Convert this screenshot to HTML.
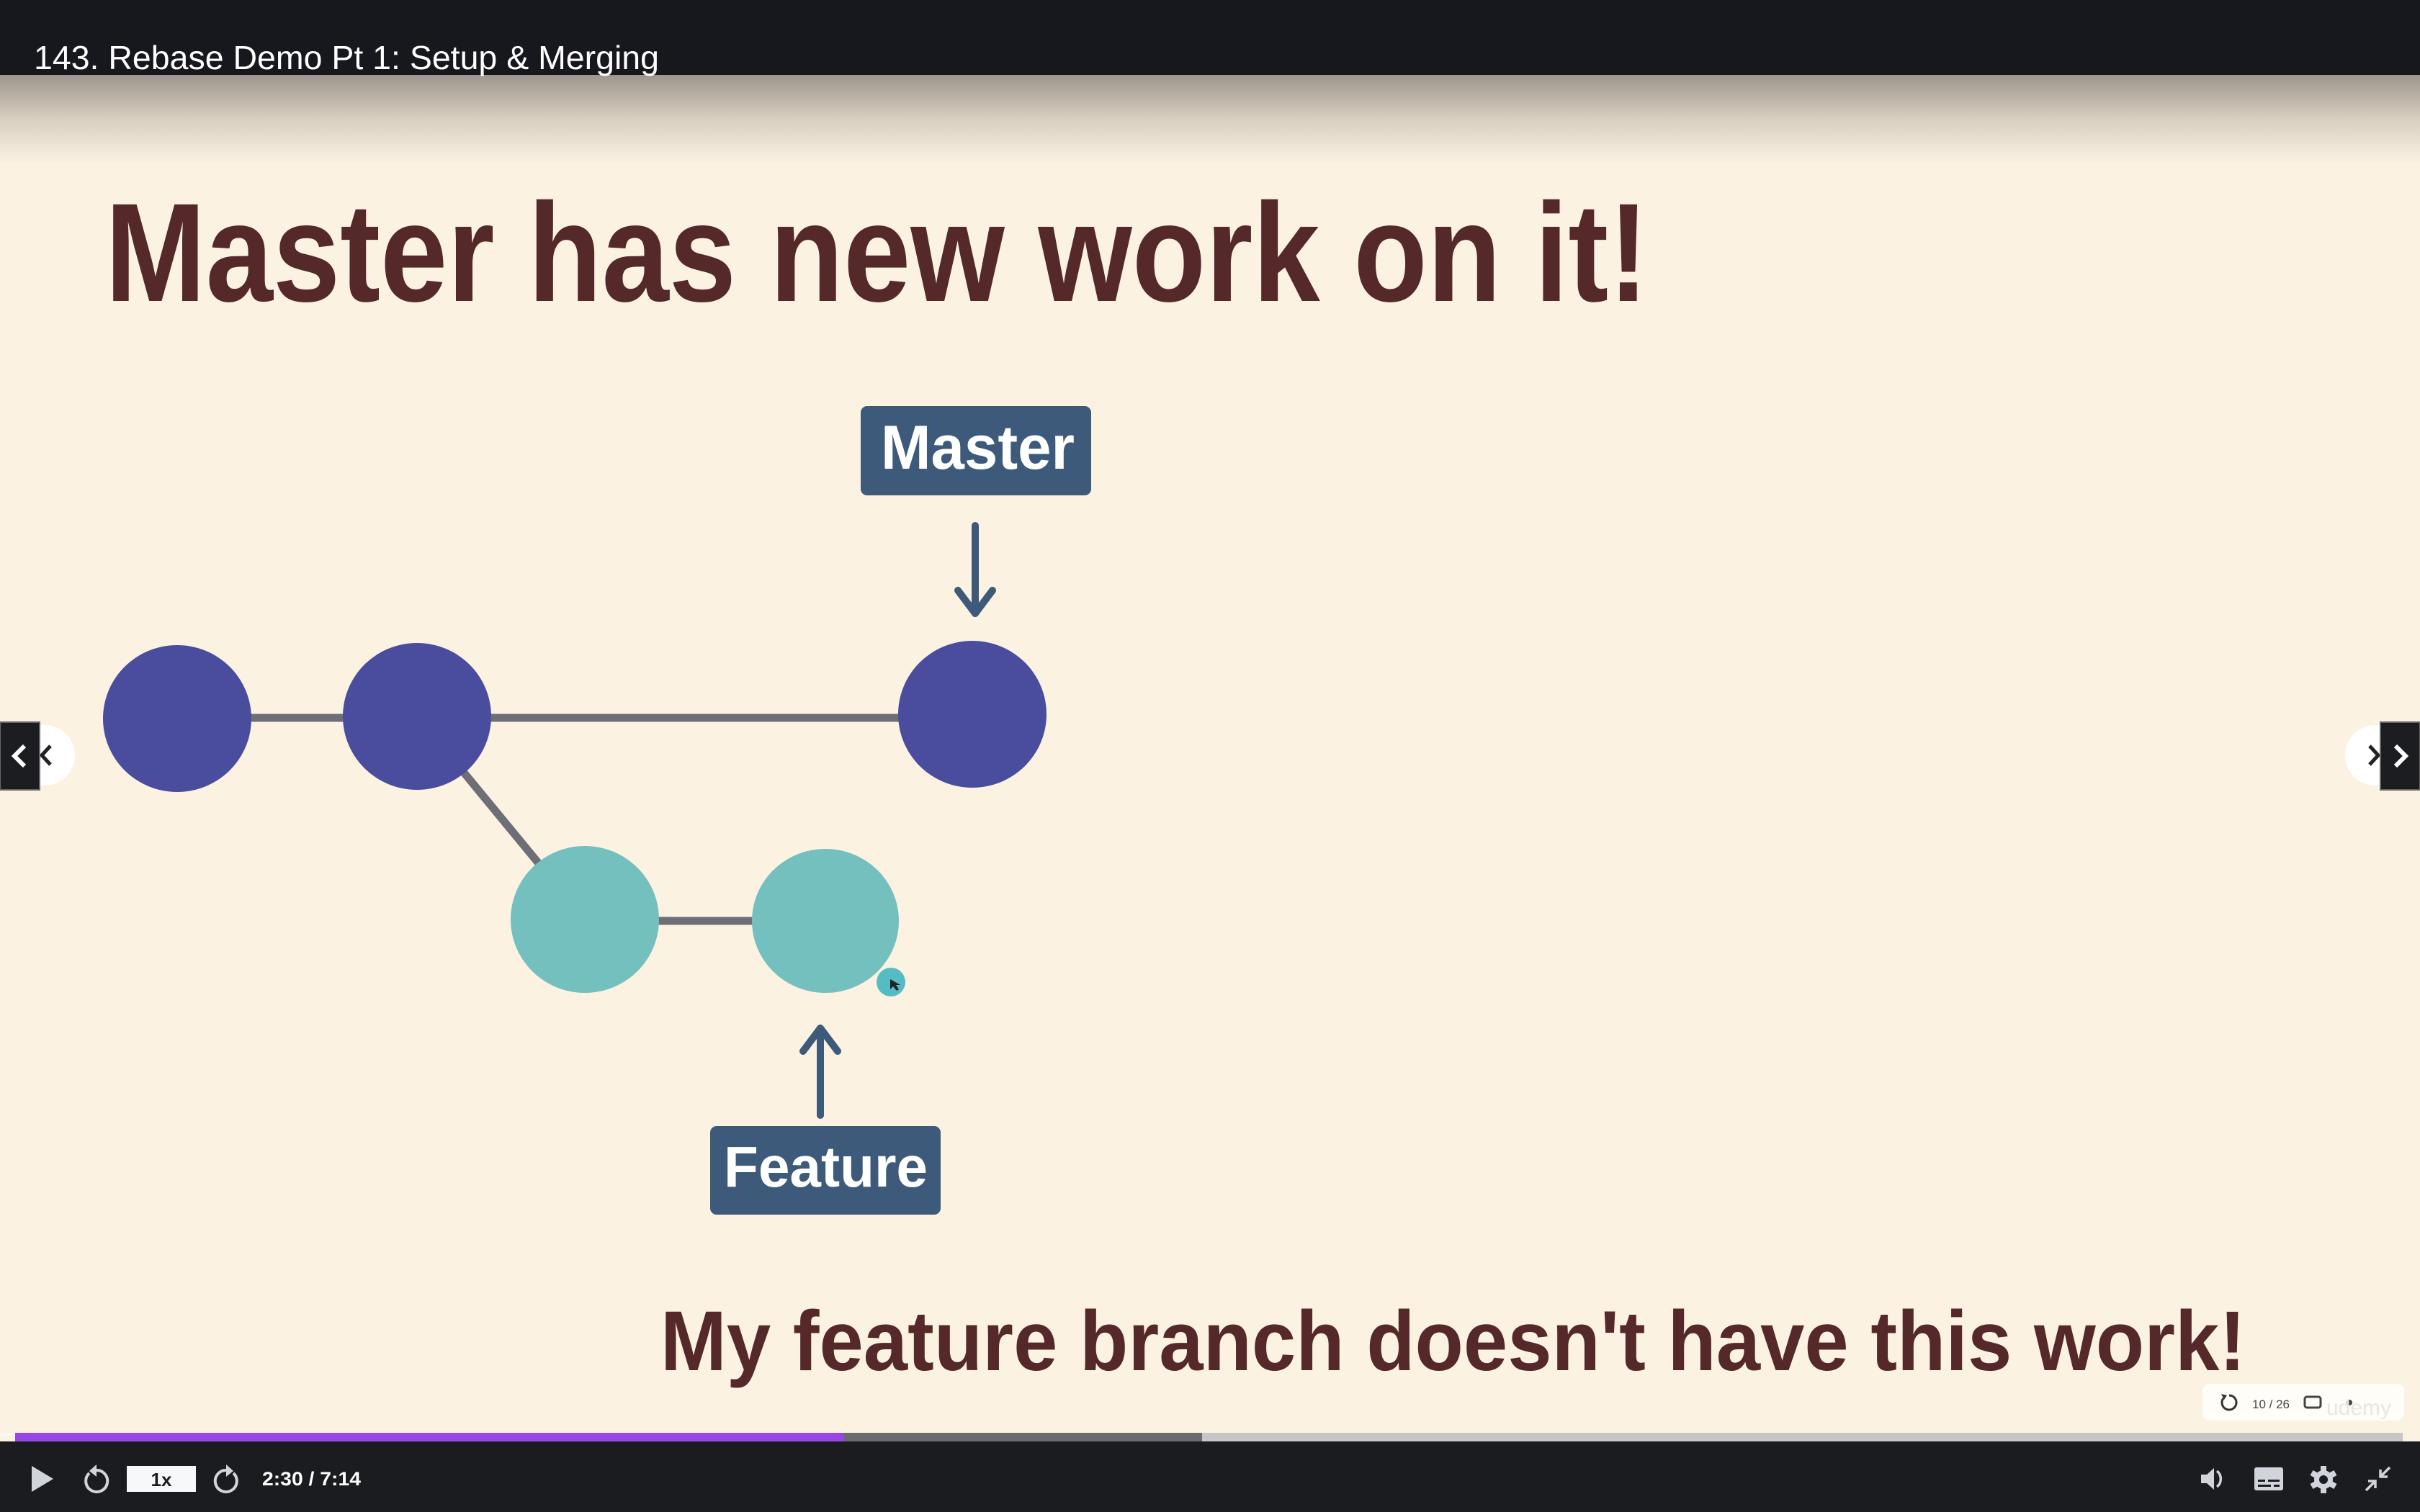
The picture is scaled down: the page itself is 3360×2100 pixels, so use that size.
<!DOCTYPE html>
<html><head><meta charset="utf-8"><style>
html,body{margin:0;padding:0;width:3360px;height:2100px;overflow:hidden;background:#fcf2e2}
svg{display:block}
</style></head><body>
<svg width="3360" height="2100" viewBox="0 0 3360 2100" xmlns="http://www.w3.org/2000/svg">
<defs>
<linearGradient id="sh" x1="0" y1="0" x2="0" y2="1">
<stop offset="0" stop-color="#9c958c"/>
<stop offset="0.5" stop-color="#d8cfc1"/>
<stop offset="1" stop-color="#fcf2e2"/>
</linearGradient>
</defs>
<rect width="3360" height="2100" fill="#fcf2e2"/>
<rect x="0" y="103" width="3360" height="125" fill="url(#sh)"/>
<rect x="0" y="0" width="3360" height="104" fill="#17181d"/>
<text x="47" y="96" font-family="Liberation Sans, sans-serif" font-size="46" fill="#fff" textLength="868" lengthAdjust="spacingAndGlyphs">143. Rebase Demo Pt 1: Setup &amp; Merging</text>

<text x="146" y="418" font-family="Liberation Sans, sans-serif" font-weight="bold" font-size="195" fill="#55282a" textLength="2143" lengthAdjust="spacingAndGlyphs">Master has new work on it!</text>

<g stroke="#6d6e76" stroke-width="11">
<line x1="246" y1="997" x2="1350" y2="997"/>
<line x1="579" y1="994" x2="812" y2="1277"/>
<line x1="812" y1="1279" x2="1146" y2="1279"/>
</g>
<g fill="#4a4c9e">
<ellipse cx="246" cy="998" rx="103" ry="102"/>
<ellipse cx="579" cy="995" rx="103" ry="102"/>
<ellipse cx="1350" cy="992" rx="103" ry="102"/>
</g>
<g fill="#73c0bf">
<ellipse cx="812" cy="1277" rx="103" ry="102"/>
<ellipse cx="1146" cy="1279" rx="102" ry="100"/>
</g>
<circle cx="1237" cy="1364" r="20" fill="#56bcc4"/>
<path d="M1236 1360 l0 14 l4 -4 l5 6 l3 -2 l-4 -6 l6 0 z" fill="#222"/>

<rect x="1195" y="564" width="320" height="124" rx="9" fill="#3d5a7a"/>
<text x="1223" y="651" font-family="Liberation Sans, sans-serif" font-weight="bold" font-size="86" fill="#fff" textLength="269" lengthAdjust="spacingAndGlyphs">Master</text>
<g stroke="#3d5a7a" stroke-width="10" stroke-linecap="round" stroke-linejoin="round" fill="none">
<line x1="1354" y1="730" x2="1354" y2="852"/>
<path d="M1330 820 L1354 852 L1378 820"/>
<line x1="1139" y1="1430" x2="1139" y2="1549"/>
<path d="M1115 1460 L1139 1428 L1163 1460"/>
</g>
<rect x="986" y="1564" width="320" height="123" rx="9" fill="#3d5a7a"/>
<text x="1005" y="1648" font-family="Liberation Sans, sans-serif" font-weight="bold" font-size="80" fill="#fff" textLength="283" lengthAdjust="spacingAndGlyphs">Feature</text>

<text x="917" y="1903" font-family="Liberation Sans, sans-serif" font-weight="bold" font-size="118" fill="#55282a" textLength="2201" lengthAdjust="spacingAndGlyphs">My feature branch doesn't have this work!</text>

<circle cx="62" cy="1049" r="42" fill="#fff"/>
<path d="M70 1036 L58 1049 L70 1062" stroke="#222" stroke-width="5" fill="none"/>
<rect x="0" y="1003" width="55" height="94" fill="#1c1d21" stroke="#666" stroke-width="2"/>
<path d="M34 1036 L20 1050 L34 1064" stroke="#fff" stroke-width="6" fill="none"/>
<circle cx="3298" cy="1049" r="42" fill="#fff"/>
<path d="M3290 1036 L3302 1049 L3290 1062" stroke="#222" stroke-width="5" fill="none"/>
<rect x="3305" y="1003" width="55" height="94" fill="#1c1d21" stroke="#666" stroke-width="2"/>
<path d="M3326 1036 L3340 1050 L3326 1064" stroke="#fff" stroke-width="6" fill="none"/>

<rect x="3058" y="1922" width="280" height="51" rx="10" fill="#fffdf8"/>
<path d="M3095 1938 a10 10 0 1 1 -8 4" stroke="#333" stroke-width="3" fill="none"/>
<path d="M3084 1936 l8 2 l-4 6 z" fill="#333"/>
<text x="3127" y="1956" font-family="Liberation Sans, sans-serif" font-size="17" fill="#444">10 / 26</text>
<rect x="3200" y="1940" width="22" height="15" rx="3" stroke="#444" stroke-width="3" fill="none"/>
<circle cx="3262" cy="1948" r="4" fill="#444"/>
<text x="3230" y="1965" font-family="Liberation Sans, sans-serif" font-size="30" fill="#e8e6e2">udemy</text>

<rect x="0" y="1990" width="3336" height="5" fill="#fbf6ee"/>
<rect x="21" y="1990" width="3315" height="12" fill="#c6c6c8"/>
<rect x="21" y="1990" width="1648" height="12" fill="#6a6b70"/>
<rect x="21" y="1990" width="1151" height="12" fill="#9747e2"/>
<rect x="0" y="2002" width="3360" height="98" fill="#1b1c20"/>

<path d="M44 2036 L74 2054 L44 2072 Z" fill="#d1d5db"/>
<path d="M124 2046 a15 15 0 1 0 10 -4" stroke="#d1d5db" stroke-width="4" fill="none"/>
<path d="M134 2034 l-10 9 l10 8 z" fill="#d1d5db"/>
<rect x="176" y="2036" width="96" height="36" fill="#f7f8fa"/>
<text x="224" y="2064" font-family="Liberation Sans, sans-serif" font-weight="bold" font-size="26" fill="#1b1c20" text-anchor="middle">1x</text>
<path d="M324 2046 a15 15 0 1 1 -10 -4" stroke="#d1d5db" stroke-width="4" fill="none"/>
<path d="M314 2034 l10 9 l-10 8 z" fill="#d1d5db"/>
<text x="364" y="2063" font-family="Liberation Sans, sans-serif" font-weight="bold" font-size="27" fill="#fff" textLength="137" lengthAdjust="spacingAndGlyphs">2:30 / 7:14</text>

<path d="M3056 2048 h8 l10 -9 v30 l-10 -9 h-8 z" fill="#d1d5db"/>
<path d="M3078 2043 a14 14 0 0 1 0 22" stroke="#d1d5db" stroke-width="3.5" fill="none"/>
<rect x="3130" y="2038" width="40" height="32" rx="3" fill="#d1d5db"/>
<rect x="3135" y="2055" width="10" height="3" fill="#1b1c20"/><rect x="3149" y="2055" width="16" height="3" fill="#1b1c20"/>
<rect x="3135" y="2062" width="18" height="3" fill="#1b1c20"/><rect x="3157" y="2062" width="8" height="3" fill="#1b1c20"/>
<g transform="translate(3226 2055)">
<circle r="13" fill="#d1d5db"/>
<g fill="#d1d5db"><rect x="-4" y="-19" width="8" height="38"/><rect x="-4" y="-19" width="8" height="38" transform="rotate(60)"/><rect x="-4" y="-19" width="8" height="38" transform="rotate(120)"/></g>
<circle r="6" fill="#1b1c20"/>
</g>
<g stroke="#d1d5db" stroke-width="3.5" fill="none">
<path d="M3318 2038 L3305 2051 M3305 2041 v10 h10"/>
<path d="M3285 2070 L3298 2057 M3288 2057 h10 v10"/>
</g>
</svg>
</body></html>
